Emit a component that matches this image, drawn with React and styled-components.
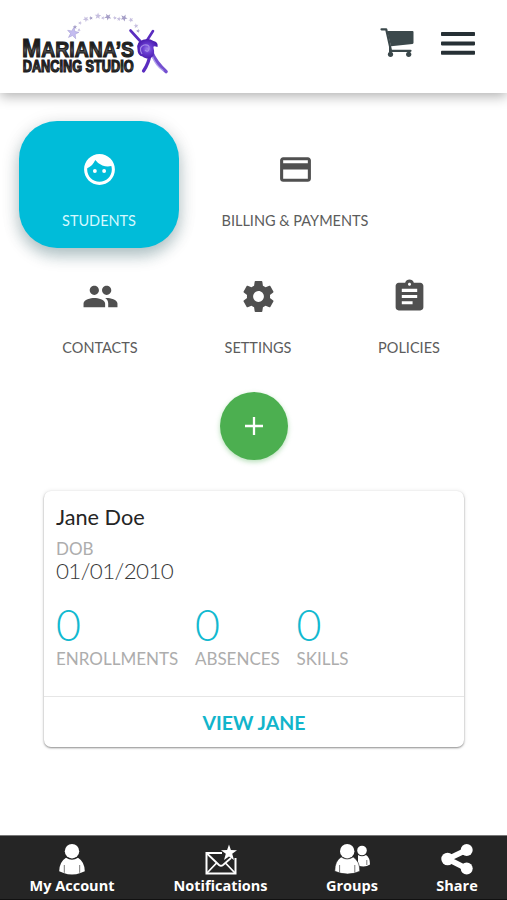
import React from 'react';
import styled, { createGlobalStyle } from 'styled-components';
import { MdFace, MdPayment, MdPeople, MdAssignment } from 'react-icons/md';

const GlobalStyle = createGlobalStyle`
  * { box-sizing: border-box; }
  body { margin: 0; background: #fff; font-family: Lato, "Liberation Sans", sans-serif; }
  button { border: 0; padding: 0; background: none; font: inherit; color: inherit; }
  svg { display: block; flex: none; }
`;

const Screen = styled.div`
  width: 507px;
  height: 900px;
  display: flex;
  flex-direction: column;
  overflow: hidden;
  background: #fff;
`;

const Header = styled.header`
  height: 93px;
  flex: none;
  display: flex;
  align-items: flex-start;
  padding: 10px 32px 0 16px;
  background: #fff;
  box-shadow: 0 3px 12px rgba(0, 0, 0, 0.32);
`;

const HeaderActions = styled.div`
  display: flex;
  gap: 26px;
  margin: 17px 0 0 auto;
`;

const Main = styled.main`
  flex: 1;
  padding-top: 28px;
`;

const Menu = styled.nav`
  display: flex;
  flex-wrap: wrap;
  padding: 0 19px;
`;

const MenuTile = styled.button`
  width: ${(p) => p.$width}px;
  height: 127px;
  display: flex;
  flex-direction: column;
  align-items: center;
  padding-top: 30px;
  border-radius: 38px;
  color: ${(p) => (p.$active ? '#fff' : '#505050')};
  background: ${(p) => (p.$active ? '#00bcd9' : 'transparent')};
  box-shadow: ${(p) => (p.$active ? '0 8px 15px rgba(0, 70, 80, 0.27), 0 3px 20px rgba(0, 0, 0, 0.1)' : 'none')};
`;

const TileLabel = styled.span`
  margin-top: 23px;
  font-size: 14.5px;
  line-height: 20px;
  white-space: nowrap;
  color: ${(p) => (p.$active ? '#d5f8ff' : '#5c5c5c')};
`;

const AddButton = styled.button`
  display: flex;
  align-items: center;
  justify-content: center;
  width: 68px;
  height: 68px;
  margin: 17px auto 0 220px;
  border-radius: 50%;
  background: #4caf50;
  box-shadow: 0 2px 5px rgba(76, 175, 80, 0.4);
`;

const Card = styled.section`
  width: 420px;
  height: 256px;
  margin: 31px 0 0 44px;
  display: flex;
  flex-direction: column;
  border-radius: 7px;
  background: #fff;
  box-shadow: 0 1px 2px rgba(0, 0, 0, 0.42), 0 0 5px rgba(0, 0, 0, 0.09);
`;

const CardBody = styled.div`
  height: 205px;
  padding: 12px 12px 0;
`;

const Name = styled.h2`
  margin: 0;
  font-size: 21.7px;
  line-height: 28px;
  font-weight: 400;
  color: #252525;
`;

const Caption = styled.div`
  font-size: 17px;
  line-height: 22px;
  white-space: nowrap;
  color: #adadad;
`;

const BirthDate = styled.div`
  font-size: 22.4px;
  line-height: 22px;
  font-weight: 300;
  letter-spacing: -0.62px;
  color: #383838;
`;

const BirthBlock = styled.div`
  margin-top: 7px;
`;

const Stats = styled.div`
  display: flex;
  gap: 16.7px;
  margin-top: 19px;
`;

const StatValue = styled.div`
  height: 47px;
  font-size: 43px;
  line-height: 48px;
  font-weight: 300;
  color: #12b9d0;
`;

const ViewButton = styled.button`
  flex: 1;
  border-top: 1px solid #e6e6e6;
  font-size: 19.5px;
  font-weight: 700;
  color: #12b5cb;
`;

const BottomBar = styled.footer`
  height: 65px;
  flex: none;
  display: grid;
  grid-template-columns: 144px 153px 110px 100px;
  border-top: 1px solid #777;
  border-bottom: 1px solid #111;
  background: #252525;
  color: #fff;
`;

const BottomItem = styled.button`
  display: flex;
  flex-direction: column;
  align-items: center;
  padding-top: 7px;
`;

const BottomLabel = styled.span`
  margin-top: 1px;
  font-family: "Open Sans", "Noto Sans", sans-serif;
  font-size: 14.5px;
  font-weight: 700;
  line-height: 20px;
  white-space: nowrap;
`;

const star = 'M0-5 1.4-1.6 5-1.5 2.1.8 3.2 4.5 0 2.3-3.2 4.5-2.1.8-5-1.5-1.4-1.6Z';

const trail = [
  [75, 27, 0.45], [80, 23, 0.4], [86, 19, 0.6], [91, 18, 0.4], [98, 16, 0.65], [103, 18, 0.4],
  [108, 17, 0.7], [115, 18, 0.4], [119, 19, 0.45], [124, 18, 0.7],
  [131, 20, 0.5], [136, 26, 0.5], [138, 31, 0.4], [79, 30, 0.35],
];

function StudioLogo() {
  return (
    <svg width="160" height="70" viewBox="16 10 160 70">
      <defs>
        <linearGradient id="letterFill" x1="0" y1="0" x2="0" y2="1">
          <stop offset="0" stopColor="#161616" />
          <stop offset=".42" stopColor="#202020" />
          <stop offset=".58" stopColor="#5c5c5c" />
          <stop offset=".75" stopColor="#222" />
          <stop offset="1" stopColor="#111" />
        </linearGradient>
        <radialGradient id="dancerFill">
          <stop offset="0" stopColor="#9b7de8" />
          <stop offset=".45" stopColor="#6a3dd2" />
          <stop offset="1" stopColor="#4a1cae" />
        </radialGradient>
      </defs>
      {trail.map(([x, y, s], i) => (
        <path key={i} d={star} transform={`translate(${x} ${y}) scale(${s}) rotate(${i * 19})`} fill={i % 3 ? '#c6bfdf' : '#a49dc6'} />
      ))}
      <path d={star} transform="translate(73 33) scale(1.15) rotate(10)" fill="#c4bcf0" stroke="#9d95cf" strokeWidth=".4" />
      <g fill="url(#letterFill)" stroke="#202020" fontFamily="Liberation Sans, sans-serif" fontWeight="700">
        <text x="22" y="57" strokeWidth="1.1" fontSize="21.5" textLength="112" lengthAdjust="spacingAndGlyphs">
          <tspan fontSize="25.5">M</tspan>ARIANA’S
        </text>
        <text x="22.7" y="72.3" strokeWidth="1.2" fontSize="15.8" textLength="111" lengthAdjust="spacingAndGlyphs">DANCING STUDIO</text>
      </g>
      <g fill="none" stroke="#5a2cc0" strokeLinecap="round">
        <path d="M130.5 30.5 141 42M153 31 146 42" strokeWidth="2.6" />
        <path d="M150 54Q149 63 143.5 71" strokeWidth="3.2" />
        <path d="M151 51Q156 63 166 71.5" stroke="#7450d0" strokeWidth="3.6" />
        <path d="M152 56Q156 66 163 70.5" stroke="#b3a0ee" strokeWidth="1.3" />
      </g>
      <path d="M138.5 42.5q8-6 15-1.5q5 1 4 6q-5-2-4 1c3 10-5 13-11 8.500q-5-1-5-7q-1-4 1-7Z" fill="url(#dancerFill)" />
      <path d="M142 54q-4-7 2-9q6-1 5 4q-1 4-4 1" fill="none" stroke="#a58be8" strokeWidth="1.2" />
    </svg>
  );
}

function CartIcon() {
  return (
    <svg width="35" height="32" viewBox="0 0 35 32" fill="#3b484b">
      <path d="M7.2 4H32.500q1 0 1 1v10.8q0 1-1 1.1L11 19.300Z" />
      <path d="M1.5 2.300H6.200L11 23.800H30.500" fill="none" stroke="#3b484b" strokeWidth="2.2" strokeLinejoin="round" strokeLinecap="round" />
      <path d="M10 19v6" stroke="#3b484b" strokeWidth="2" />
      <circle cx="10.5" cy="27.3" r="2.6" />
      <circle cx="28.7" cy="27.3" r="2.6" />
    </svg>
  );
}

function HamburgerIcon() {
  return (
    <svg width="34" height="32" viewBox="0 0 34 32" fill="#263035">
      <rect y="5" width="34" height="4" rx=".8" />
      <rect y="14.4" width="34" height="4" rx=".8" />
      <rect y="23.8" width="34" height="4" rx=".8" />
    </svg>
  );
}

function GearIcon({ size }) {
  return (
    <svg width={size} height={size} viewBox="0 0 24 24" fill="currentColor">
      <path d="M19.43 12.98c.04-.32.07-.64.07-.98s-.03-.66-.07-.98l2.11-1.65c.19-.15.24-.42.12-.64l-2-3.46c-.12-.22-.39-.3-.61-.22l-2.49 1c-.52-.4-1.08-.73-1.69-.98l-.38-2.65C14.46 2.18 14.25 2 14 2h-4c-.25 0-.46.18-.49.42l-.38 2.65c-.61.25-1.17.59-1.69.98l-2.49-1c-.23-.09-.49 0-.61.22l-2 3.46c-.13.22-.07.49.12.64l2.11 1.65c-.04.32-.07.65-.07.98s.03.66.07.98l-2.11 1.65c-.19.15-.24.42-.12.64l2 3.46c.12.22.39.3.61.22l2.49-1c.52.4 1.08.73 1.69.98l.38 2.65c.03.24.24.42.49.42h4c.25 0 .46-.18.49-.42l.38-2.65c.61-.25 1.17-.59 1.69-.98l2.49 1c.23.09.49 0 .61-.22l2-3.46c.12-.22.07-.49-.12-.64l-2.11-1.65zM12 15.5c-1.93 0-3.5-1.57-3.5-3.5s1.57-3.5 3.5-3.5 3.5 1.57 3.5 3.5-1.57 3.5-3.5 3.5z" />
    </svg>
  );
}

function AccountIcon() {
  return (
    <svg width="28" height="32" viewBox="0 0 28 32" fill="#fff">
      <circle cx="14" cy="8.2" r="7.2" />
      <path d="M8 14.8q6 4 12 0 6.6 4 6.8 13.5l-4.4 1.7Q14 33 5.6 30l-4.4-1.7Q1.4 18.8 8 14.8Z" />
      <path d="M6.3 22v7.8M21.7 22v7.8" stroke="#555" strokeWidth=".8" />
    </svg>
  );
}

function NotificationIcon() {
  return (
    <svg width="32" height="32" viewBox="0 0 32 32">
      <path d="M17 10H1.5v20.6h29V15" fill="none" stroke="#fff" strokeWidth="2" />
      <path d="M2 10.5 14 22q2 1.5 4 0L26 15M2 30 12 19.5M30 30 20 19.5" fill="none" stroke="#fff" strokeWidth="1.8" />
      <path d="M24 1.5 25.9 7 32 7.2 27.2 10.8 29 17 24 13.4 19 17 20.8 10.8 16 7.2 22.1 7Z" fill="#fff" />
    </svg>
  );
}

function GroupsIcon() {
  return (
    <svg width="36" height="32" viewBox="0 0 36 32" fill="#fff">
      <circle cx="28" cy="7.5" r="4.8" />
      <path d="M24 12q4 2.5 8 0 4 2.5 4 9.5-5 3.5-12 1Z" />
      <path d="M32.8 17v5" stroke="#555" strokeWidth=".8" />
      <path d="M7.2 14q6 4 12 0 6.6 4 6.6 14.3-12 5.5-25 0Q.6 18 7.2 14Z" stroke="#252525" strokeWidth=".6" />
      <circle cx="13.2" cy="8.2" r="7.2" />
      <path d="M5.6 22v7.5M20.8 22v7.5" stroke="#555" strokeWidth=".8" />
    </svg>
  );
}

function ShareIcon() {
  return (
    <svg width="32" height="32" viewBox="0 0 32 32" fill="#fff">
      <path d="M25.5 7 6.8 16 25.5 25.5" fill="none" stroke="#fff" strokeWidth="5.6" />
      <circle cx="25.7" cy="6.9" r="6" />
      <circle cx="6.6" cy="16" r="6.3" />
      <circle cx="25.7" cy="25.5" r="6" />
    </svg>
  );
}

const tiles = [
  { label: 'STUDENTS', Icon: MdFace, width: 160, active: true },
  { label: 'BILLING & PAYMENTS', Icon: MdPayment, width: 232 },
  { label: 'CONTACTS', Icon: MdPeople, width: 162 },
  { label: 'SETTINGS', Icon: GearIcon, width: 154 },
  { label: 'POLICIES', Icon: MdAssignment, width: 148 },
];

const stats = [['ENROLLMENTS', 0], ['ABSENCES', 0], ['SKILLS', 0]];

const bottomItems = [
  ['My Account', AccountIcon],
  ['Notifications', NotificationIcon],
  ['Groups', GroupsIcon],
  ['Share', ShareIcon],
];

export default function App() {
  return (
    <Screen>
      <GlobalStyle />
      <Header>
        <StudioLogo />
        <HeaderActions>
          <CartIcon />
          <HamburgerIcon />
        </HeaderActions>
      </Header>
      <Main>
        <Menu>
          {tiles.map(({ label, Icon, width, active }) => (
            <MenuTile key={label} $width={width} $active={active}>
              <Icon size={37} />
              <TileLabel $active={active}>{label}</TileLabel>
            </MenuTile>
          ))}
        </Menu>
        <AddButton aria-label="Add student">
          <svg width="18" height="18" viewBox="0 0 18 18">
            <path d="M9 0v18M0 9h18" stroke="#fff" strokeWidth="2.3" />
          </svg>
        </AddButton>
        <Card>
          <CardBody>
            <Name>Jane Doe</Name>
            <BirthBlock>
              <Caption>DOB</Caption>
              <BirthDate>01/01/2010</BirthDate>
            </BirthBlock>
            <Stats>
              {stats.map(([label, value]) => (
                <div key={label}>
                  <StatValue>{value}</StatValue>
                  <Caption>{label}</Caption>
                </div>
              ))}
            </Stats>
          </CardBody>
          <ViewButton>VIEW JANE</ViewButton>
        </Card>
      </Main>
      <BottomBar>
        {bottomItems.map(([label, Icon]) => (
          <BottomItem key={label}>
            <Icon />
            <BottomLabel>{label}</BottomLabel>
          </BottomItem>
        ))}
      </BottomBar>
    </Screen>
  );
}
